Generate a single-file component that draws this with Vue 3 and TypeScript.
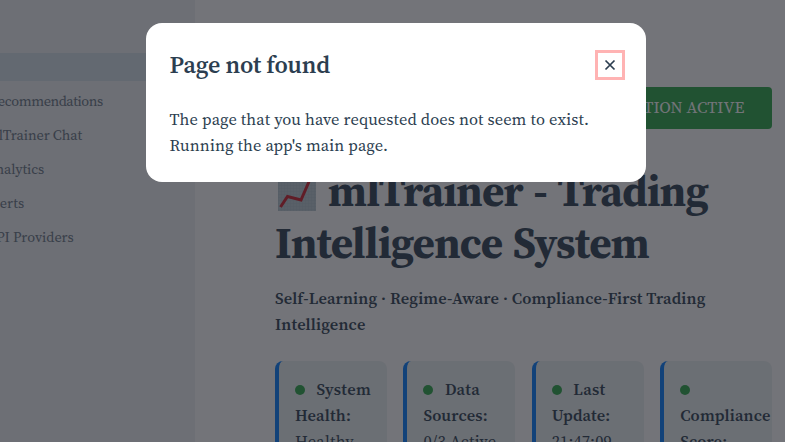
<script setup lang="ts">
import type { Directive } from 'vue'

interface Line { text: string; width: number; bold: boolean }
interface Card { title: string; titleWidth: number; lines: Line[] }

// Tracks a line of text so that it spans the given width.
const vFit: Directive<HTMLElement, number> = {
  mounted(el, binding) {
    const count = (el.textContent ?? '').trim().length
    if (!count || !binding.value) return
    const natural = el.getBoundingClientRect().width
    el.style.letterSpacing = `${(binding.value - natural) / count}px`
  },
}

const nav: string[] = ['Recommendations', 'mlTrainer Chat', 'Analytics', 'Alerts', 'API Providers']

const cards: Card[] = [
  { title: 'System', titleWidth: 54.5, lines: [{ text: 'Health:', width: 56, bold: true }, { text: 'Healthy', width: 59, bold: false }] },
  { title: 'Data', titleWidth: 35, lines: [{ text: 'Sources:', width: 64.5, bold: true }, { text: '0/3 Active', width: 73, bold: false }] },
  { title: 'Last', titleWidth: 32, lines: [{ text: 'Update:', width: 58.5, bold: true }, { text: '21:47:09', width: 60, bold: false }] },
  { title: '', titleWidth: 0, lines: [{ text: 'Compliance', width: 90.5, bold: true }, { text: 'Score:', width: 47, bold: true }] },
]
</script>

<template>
  <div class="app">
    <aside class="sidebar">
      <nav>
        <div class="nav-item active"></div>
        <div v-for="(label, i) in nav" :key="label" class="nav-item" :class="'item-' + i">
          <span>{{ label }}</span>
        </div>
      </nav>
    </aside>
    <main class="main">
      <div class="banner"><span v-fit="101">TION ACTIVE</span></div>
      <h1>
        <span class="row">
          <svg class="chart" viewBox="0 0 38 38">
            <defs>
              <pattern id="grid" width="3" height="3" patternUnits="userSpaceOnUse">
                <path d="M0 0H3M0 0V3" stroke="#a3bac6" stroke-width="0.6" />
              </pattern>
            </defs>
            <rect width="38" height="38" fill="#bccad2" />
            <rect width="38" height="38" fill="url(#grid)" />
            <path d="M2.5 34L9.5 23.5L23 27L33 4" fill="none" stroke="#cc1c28" stroke-width="3" />
          </svg>
          <span v-fit="380">mlTrainer - Trading</span>
        </span>
        <span class="row"><span v-fit="374">Intelligence System</span></span>
      </h1>
      <div class="subtitle">
        <div><span v-fit="430.5">Self-Learning · Regime-Aware · Compliance-First Trading</span></div>
        <div><span v-fit="90.5">Intelligence</span></div>
      </div>
      <section class="cards">
        <article v-for="(card, i) in cards" :key="i" class="card">
          <div class="card-head">
            <i class="dot"></i>
            <span v-if="card.title" v-fit="card.titleWidth" class="strong">{{ card.title }}</span>
          </div>
          <div v-for="line in card.lines" :key="line.text" :class="{ strong: line.bold }">
            <span v-fit="line.width">{{ line.text }}</span>
          </div>
        </article>
      </section>
    </main>
  </div>
  <div class="overlay">
    <div class="dialog" role="dialog" aria-modal="true">
      <header>
        <h2><span v-fit="160.5">Page not found</span></h2>
        <button class="close" type="button" aria-label="Close">
          <svg viewBox="0 0 12 12"><path d="M1.5 1.5L10.5 10.5M10.5 1.5L1.5 10.5" /></svg>
        </button>
      </header>
      <div class="body">
        <div><span v-fit="419.5">The page that you have requested does not seem to exist.</span></div>
        <div><span v-fit="218.5">Running the app's main page.</span></div>
      </div>
    </div>
  </div>
</template>

<style>
body { margin: 0; overflow: hidden; }
</style>

<style scoped>
* { box-sizing: border-box; }
.app, .overlay { font-family: "Source Serif Pro", "Source Serif 4", "Liberation Serif", serif; font-size: 16.4px; line-height: 26px; font-variation-settings: "opsz" 12; }
.app { display: flex; width: 785px; height: 442px; overflow: hidden; background: #fff; color: #2c3e50; }
span { white-space: nowrap; display: inline-block; }
.sidebar { width: 195px; flex: none; padding-top: 53px; background: #f0f1f4; }
.nav-item { height: 28px; margin-bottom: 6px; display: flex; align-items: center; font-size: 14.3px; color: #667482; }
.nav-item.active { background: #d4e1ea; }
.item-0 { margin-left: -11px; letter-spacing: -0.4px; }
.item-1 { margin-left: -14px; letter-spacing: -0.1px; }
.item-2 { margin-left: -14px; letter-spacing: -0.1px; }
.item-3 { margin-left: -14px; }
.item-4 { margin-left: -13px; letter-spacing: -0.05px; }
.main { flex: none; width: 577px; padding: 87px 0 0 80px; }
.banner { height: 42px; border-radius: 4px; background: #28a745; color: #fff; display: flex; align-items: center; justify-content: flex-end; padding: 0 27.5px 2px 0; }
h1 { margin: 36px 0 0; font-size: 43px; line-height: 52px; font-weight: 700; font-variation-settings: "opsz" 20; word-spacing: 2px; }
.row { display: flex; align-items: center; }
.chart { width: 38px; height: 38px; margin: 2px 12px 0 3px; flex: none; }
.subtitle { margin-top: 16px; font-weight: 600; }
.cards { margin-top: 24px; display: grid; grid-template-columns: repeat(4, 112px); column-gap: 16.4px; }
.card { height: 130px; padding: 15px 0 0 16px; border-left: 4px solid #007bff; border-radius: 8px; background: #ebf1f2; }
.card-head { display: flex; align-items: center; height: 26px; }
.dot { width: 10px; height: 10px; border-radius: 50%; background: #28a745; margin: 2px 11.5px 0 0; }
.strong { font-weight: 600; }
.overlay { position: absolute; inset: 0; background: rgba(29, 31, 39, 0.62); color: #2c3e50; padding-top: 23px; }
.dialog { width: 500px; height: 159px; margin-left: 146px; border-radius: 16px; background: #fff; padding: 27px 21px 0 23.5px; }
header { display: flex; justify-content: space-between; align-items: center; height: 30px; }
h2 { margin: 0; font-size: 24px; line-height: 30px; font-weight: 600; font-variation-settings: "opsz" 18; }
.close { width: 30px; height: 30px; padding: 0; border: 3px solid #ffb3b3; background: #fff; display: flex; align-items: center; justify-content: center; }
.close svg { width: 12px; height: 12px; fill: none; stroke: #2c3e50; stroke-width: 1.7; }
.body { margin-top: 26px; }
</style>
